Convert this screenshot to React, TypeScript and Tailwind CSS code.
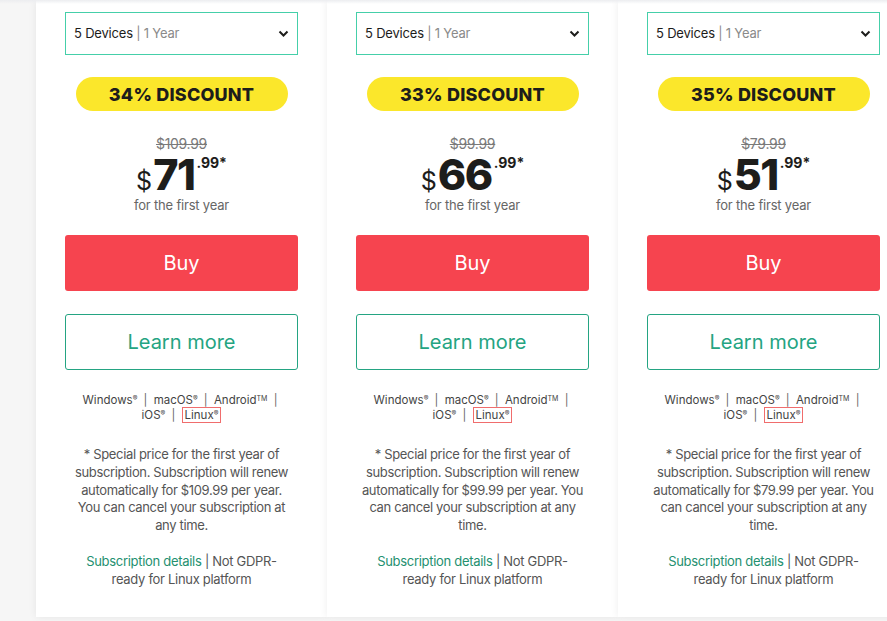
import React from 'react';

const plans = [
  { discount: '34% DISCOUNT', old: '$109.99', main: '71', cents: '.99', renew: '$109.99' },
  { discount: '33% DISCOUNT', old: '$99.99', main: '66', cents: '.99', renew: '$99.99' },
  { discount: '35% DISCOUNT', old: '$79.99', main: '51', cents: '.99', renew: '$79.99' },
];

function Chevron() {
  return (
    <svg width="11" height="8" viewBox="0 0 11 8" fill="none">
      <path d="M1.5 1.5 L5.5 5.5 L9.5 1.5" stroke="#1d1d1b" strokeWidth="2" />
    </svg>
  );
}

function Card({ plan }: any) {
  return (
    <div className="w-[291px] shrink-0 h-[617px] bg-white shadow-[0_0_8px_rgba(0,0,0,0.07)] px-[29px] pt-[12px] flex flex-col items-center">
      <div className="w-full h-[43px] border border-[#45cfa9] flex items-center justify-between pl-[8px] pr-[8px] text-[13px]">
        <span className="text-[#1d1d1b] tracking-[-0.2px]">
          5 Devices <span className="text-[#8a8a8a]">| 1 Year</span>
        </span>
        <Chevron />
      </div>
      <div className="mt-[22px] w-[212px] h-[34px] rounded-full bg-[#fbe72b] flex items-center justify-center text-[18px] font-extrabold text-[#1d1d1b] tracking-[0.2px]">
        {plan.discount}
      </div>
      <div className="mt-[25px] text-[14px] leading-[16px] text-[#7a7a7a] line-through tracking-[-0.3px]">{plan.old}</div>
      <div className="flex items-start text-[#1d1d1b] h-[40px] mt-[2px]">
        <span className="text-[25px] leading-[25px] mt-[15px] mr-[1px]">$</span>
        <span className="text-[43px] leading-[40px] font-extrabold tracking-[-1.5px]">{plan.main}</span>
        <span className="text-[14px] leading-[14px] font-bold mt-[2px] ml-[2px]">{plan.cents}*</span>
      </div>
      <div className="mt-[3px] text-[13px] leading-[16px] text-[#666] tracking-[-0.2px]">for the first year</div>
      <button className="mt-[22px] w-full h-[56px] rounded-[3px] bg-[#f6444f] text-white text-[20px]">Buy</button>
      <button className="mt-[23px] w-full h-[56px] rounded-[3px] border border-[#24a482] text-[#24a482] text-[20px]">Learn more</button>
      <div className="mt-[23px] text-[11.5px] leading-[15px] text-[#444] text-center">
        <div>
          Windows<sup className="text-[7px]">®</sup> <span className="mx-[3px] text-[#666]">|</span> macOS<sup className="text-[7px]">®</sup>{' '}
          <span className="mx-[3px] text-[#666]">|</span> Android<sup className="text-[7px]">TM</sup> <span className="mx-[3px] text-[#666]">|</span>
        </div>
        <div>
          iOS<sup className="text-[7px]">®</sup> <span className="mx-[3px] text-[#666]">|</span>{' '}
          <span className="border border-[#f06d6d] px-[2px]">
            Linux<sup className="text-[7px]">®</sup>
          </span>
        </div>
      </div>
      <p className="mt-[23px] text-[13px] leading-[17.8px] text-[#555] text-center w-[225px] tracking-[-0.35px]">
        * Special price for the first year of subscription. Subscription will renew automatically for {plan.renew} per year. You can cancel your subscription at any time.
      </p>
      <p className="mt-[18px] text-[13px] leading-[17.8px] text-[#555] text-center w-[222px] tracking-[-0.3px]">
        <span className="text-[#24906f]">Subscription details</span> | Not GDPR-ready for Linux platform
      </p>
    </div>
  );
}

export default function App() {
  return (
    <div className="w-[887px] h-[621px] overflow-hidden bg-[#f6f6f6] relative" style={{ fontFamily: 'Inter, "Noto Sans", sans-serif' }}>
      <div className="absolute top-0 left-0 right-0 h-[4px] bg-gradient-to-b from-[#ecedf0] to-transparent z-10" />
      <div className="flex pl-[36px]">
        {plans.map((p, i) => (
          <Card key={i} plan={p} />
        ))}
      </div>
    </div>
  );
}
